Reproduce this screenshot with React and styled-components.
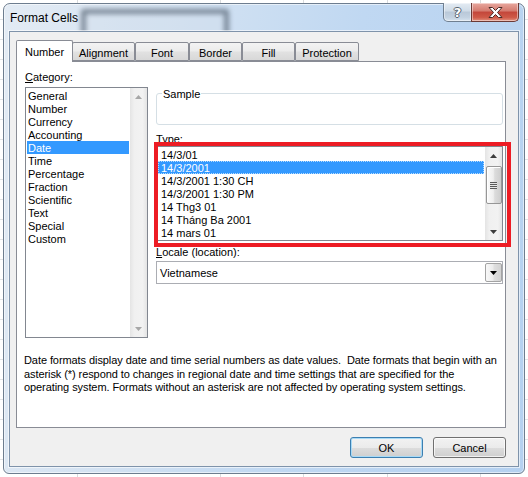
import React from 'react';
import styled, { createGlobalStyle } from 'styled-components';

const FONT = `"Liberation Sans", Arial, sans-serif`;

const Global = createGlobalStyle`
  html, body { margin: 0; padding: 0; }
  body {
    width: 528px;
    height: 477px;
    overflow: hidden;
    font-family: ${FONT};
    background-color: #ffffff;
    background-image:
      linear-gradient(90deg, transparent 77px, #d9dbdd 77px, #d9dbdd 78px, transparent 78px),
      linear-gradient(90deg, transparent 220px, #d9dbdd 220px, #d9dbdd 221px, transparent 221px),
      linear-gradient(90deg, transparent 303px, #d9dbdd 303px, #d9dbdd 304px, transparent 304px),
      linear-gradient(90deg, transparent 387px, #d9dbdd 387px, #d9dbdd 388px, transparent 388px),
      linear-gradient(90deg, transparent 480px, #d9dbdd 480px, #d9dbdd 481px, transparent 481px),
      repeating-linear-gradient(180deg, transparent 0, transparent 19px, #e2e4e6 19px, #e2e4e6 20px);
  }
  #root { width: 528px; height: 477px; }
`;

const Window = styled.div`
  box-sizing: border-box;
  margin: 3px 0 0 3px;
  width: 522px;
  height: 471px;
  border: 1px solid #6d7d8f;
  border-radius: 7px 7px 6px 6px;
  background: linear-gradient(100deg, #e3ebf4 0%, #d3e2f2 30%, #c0d8f2 60%, #b5d1f0 100%);
  box-shadow: inset 0 0 0 1px rgba(255, 255, 255, 0.55);
  padding: 0 5px 6px 5px;
  display: flex;
  flex-direction: column;
`;

const TitleBar = styled.div`
  height: 27px;
  flex: none;
  position: relative;
  display: flex;
  align-items: flex-start;
`;

const GlassShadow = styled.div`
  position: absolute;
  left: 72px;
  top: 5px;
  width: 148px;
  height: 34px;
  box-sizing: border-box;
  border: 5px solid rgba(60, 75, 92, 0.6);
  border-radius: 3px;
  background: rgba(210, 222, 235, 0.35);
  filter: blur(2.5px);
  pointer-events: none;
`;

const Title = styled.div`
  position: relative;
  margin: 7px 0 0 1px;
  font-size: 12px;
  line-height: 14px;
  color: #000;
`;

const Controls = styled.div`
  position: relative;
  margin: -1px 0 0 auto;
  display: flex;
`;

const CapButton = styled.div`
  box-sizing: border-box;
  height: 19px;
  width: ${(p) => p.$w}px;
  display: flex;
  align-items: center;
  justify-content: center;
  border: 1px solid ${(p) => (p.$close ? '#6b3a36' : '#6f7f90')};
  border-top: none;
  border-radius: ${(p) => (p.$close ? '0 0 5px 0' : '0 0 0 5px')};
  margin-left: ${(p) => (p.$close ? '-1px' : '0')};
  background: ${(p) =>
    p.$close
      ? 'linear-gradient(#e8a89f 0%, #d47a6e 45%, #c3463a 50%, #cf5a48 80%, #e2917f 100%)'
      : 'linear-gradient(#e3ebf3 0%, #cfdbe7 45%, #b9c8d8 50%, #c3d2e1 80%, #d8e4ef 100%)'};
  box-shadow: inset 0 0 0 1px rgba(255, 255, 255, 0.45);
`;

const HelpGlyph = styled.span`
  font-family: "DejaVu Sans", ${FONT};
  font-weight: bold;
  font-size: 13px;
  line-height: 13px;
  color: #ffffff;
  margin-top: 1px;
  text-shadow: 1px 0 0 #56626f, -1px 0 0 #56626f, 0 1px 0 #56626f, 0 -1px 0 #56626f;
`;

const Client = styled.div`
  position: relative;
  flex: 1;
  border: 1px solid #7f93aa;
  box-shadow: 0 0 0 1px rgba(255, 255, 255, 0.6);
  background: #f0f0f0;
  padding: 8px 12px 0 6px;
  display: flex;
  flex-direction: column;
`;

const Tabs = styled.div`
  display: flex;
  align-items: flex-start;
  height: 21px;
  position: relative;
  z-index: 1;
`;

const Tab = styled.div`
  box-sizing: border-box;
  width: ${(p) => p.$w}px;
  height: ${(p) => (p.$active ? 22 : 19)}px;
  margin-top: ${(p) => (p.$active ? 0 : 2)}px;
  margin-left: ${(p) => (p.$overlap ? -1 : 0)}px;
  border: 1px solid #898c95;
  border-bottom: ${(p) => (p.$active ? 'none' : '1px solid #898c95')};
  border-radius: 2px 2px 0 0;
  background: ${(p) =>
    p.$active ? '#ffffff' : 'linear-gradient(#f3f3f3 0%, #ececec 45%, #e1e1e1 55%, #d8d8d8 100%)'};
  position: relative;
  z-index: ${(p) => (p.$active ? 2 : 0)};
  display: flex;
  justify-content: center;
  padding-top: ${(p) => (p.$active ? 5 : 4)}px;
  font-size: 11px;
  line-height: 13px;
  color: #000;
`;

const Panel = styled.div`
  box-sizing: border-box;
  width: 490px;
  height: 367px;
  border: 1px solid #898c95;
  background: #ffffff;
  padding: 8px 2px 0 8px;
  display: flex;
  flex-direction: column;
`;

const Columns = styled.div`
  display: flex;
  gap: 8px;
`;

const Column = styled.div`
  width: ${(p) => p.$w}px;
  display: flex;
  flex-direction: column;
`;

const Label = styled.div`
  font-size: 11px;
  line-height: 14px;
  height: 13px;
  margin-top: ${(p) => p.$mt || 0}px;
  color: #000;
  u { text-decoration: underline; text-underline-offset: 1px; }
`;

const ListBox = styled.div`
  box-sizing: border-box;
  height: ${(p) => p.$h}px;
  margin-top: ${(p) => p.$mt || 0}px;
  border: 1px solid #828790;
  background: #fff;
  display: flex;
`;

const Items = styled.div`
  flex: 1;
  padding: 1px 1px 0 1px;
  overflow: hidden;
`;

const Item = styled.div`
  height: 13px;
  line-height: 14px;
  font-size: 11px;
  padding-left: ${(p) => p.$pl || 1}px;
  white-space: nowrap;
  box-sizing: border-box;
  color: ${(p) => (p.$sel ? '#ffffff' : '#000000')};
  background: ${(p) => (p.$sel ? '#3399ff' : 'transparent')};
  outline: ${(p) => (p.$focus ? '1px dotted #b6dcff' : 'none')};
  outline-offset: -1px;
`;

const ScrollBar = styled.div`
  width: 17px;
  flex: none;
  display: flex;
  flex-direction: column;
  background: linear-gradient(90deg, #e4e4e4 0%, #f0f0f0 25%, #f2f2f2 75%, #e4e4e4 100%);
`;

const ArrowBox = styled.div`
  height: 17px;
  flex: none;
  display: flex;
  align-items: center;
  justify-content: center;
`;

const Track = styled.div`
  flex: 1;
  display: flex;
  flex-direction: column;
  align-items: center;
`;

const Thumb = styled.div`
  box-sizing: border-box;
  width: 16px;
  height: 38px;
  margin-top: 2px;
  border: 1px solid #969696;
  border-radius: 2px;
  background: linear-gradient(90deg, #fbfbfb 0%, #eeeeee 45%, #dcdcdc 55%, #cdcdcd 100%);
  box-shadow: inset 1px 1px 0 #ffffff;
  display: flex;
  align-items: center;
  justify-content: center;
`;

const Grip = styled.div`
  width: 7px;
  height: 7px;
  background: repeating-linear-gradient(180deg, #5a5a5a 0, #5a5a5a 1px, #e6e6e6 1px, #e6e6e6 2px);
`;

const GroupBox = styled.div`
  position: relative;
  box-sizing: border-box;
  height: 32px;
  margin-top: 23px;
  border: 1px solid #d5dfe5;
  border-radius: 3px;
`;

const Legend = styled.span`
  position: absolute;
  left: 5px;
  top: -7px;
  padding: 0 1px;
  background: #fff;
  font-size: 11px;
  line-height: 14px;
  color: #000;
`;

const Marked = styled.div`
  position: relative;
  margin-top: 1px;
`;

const RedMark = styled.div`
  position: absolute;
  left: -2px;
  top: -4px;
  right: -8px;
  bottom: -6px;
  border: 4px solid #ed1c24;
  pointer-events: none;
`;

const Select = styled.div`
  box-sizing: border-box;
  height: 23px;
  margin-top: 3px;
  border: 1px solid #abadb3;
  background: #fff;
  display: flex;
  align-items: center;
  padding-left: 3px;
  font-size: 11px;
  color: #000;
`;

const SelectText = styled.span`
  flex: 1;
  padding-top: 1px;
`;

const DropButton = styled.div`
  box-sizing: border-box;
  width: 17px;
  height: 19px;
  border: 1px solid #a3a3a3;
  border-radius: 2px;
  background: linear-gradient(90deg, #f8f8f8 0%, #ececec 45%, #dedede 55%, #d2d2d2 100%);
  display: flex;
  align-items: center;
  justify-content: center;
`;

const Description = styled.div`
  margin: 16px 0 0 -1px;
  font-size: 11px;
  line-height: 13.5px;
  letter-spacing: -0.08px;
  color: #000;
  white-space: nowrap;
`;

const ButtonRow = styled.div`
  width: 490px;
  margin-top: 9px;
  display: flex;
  justify-content: flex-end;
  gap: 10px;
`;

const Button = styled.button`
  box-sizing: border-box;
  width: 73px;
  height: 21px;
  padding: 1px 0 0;
  border: 1px solid ${(p) => (p.$primary ? '#3c7fb1' : '#707070')};
  border-radius: 3px;
  background: linear-gradient(#f2f2f2 0%, #ebebeb 50%, #dddddd 50%, #cfcfcf 100%);
  box-shadow: inset 0 0 0 1px ${(p) => (p.$primary ? '#a8daf6' : 'rgba(255,255,255,0.7)')};
  font-family: ${FONT};
  font-size: 11px;
  color: #000;
`;

const Triangle = ({ up, color }) => (
  <svg width="7" height="4" viewBox="0 0 7 4">
    <polygon points={up ? '0,4 7,4 3.5,0' : '0,0 7,0 3.5,4'} fill={color} />
  </svg>
);

const CloseIcon = () => (
  <svg width="15" height="11" viewBox="0 0 15 11">
    <polygon
      points="1,0.5 4.5,0.5 7.5,3.5 10.5,0.5 14,0.5 9.5,5.5 14,10.5 10.5,10.5 7.5,7.5 4.5,10.5 1,10.5 5.5,5.5"
      fill="#ffffff"
      stroke="#4a2a26"
      strokeWidth="1"
      strokeLinejoin="round"
    />
  </svg>
);

const categories = [
  'General', 'Number', 'Currency', 'Accounting', 'Date', 'Time',
  'Percentage', 'Fraction', 'Scientific', 'Text', 'Special', 'Custom',
];

const types = [
  '14/3/01', '14/3/2001', '14/3/2001 1:30 CH', '14/3/2001 1:30 PM',
  '14 Thg3 01', '14 Tháng Ba 2001', '14 mars 01',
];

const tabs = [
  { label: 'Number', w: 57 },
  { label: 'Alignment', w: 63 },
  { label: 'Font', w: 54 },
  { label: 'Border', w: 53 },
  { label: 'Fill', w: 53 },
  { label: 'Protection', w: 64 },
];

export default function App() {
  return (
    <>
      <Global />
      <Window>
        <TitleBar>
          <GlassShadow />
          <Title>Format Cells</Title>
          <Controls>
            <CapButton $w={29}>
              <HelpGlyph>?</HelpGlyph>
            </CapButton>
            <CapButton $w={48} $close>
              <CloseIcon />
            </CapButton>
          </Controls>
        </TitleBar>
        <Client>
          <Tabs>
            {tabs.map((t, i) => (
              <Tab key={t.label} $w={t.w} $active={i === 0} $overlap={i === 1}>
                {t.label}
              </Tab>
            ))}
          </Tabs>
          <Panel>
            <Columns>
              <Column $w={123}>
                <Label>
                  <u>C</u>ategory:
                </Label>
                <ListBox $h={251} $mt={4}>
                  <Items>
                    {categories.map((c) => (
                      <Item key={c} $sel={c === 'Date'} $pl={1}>
                        {c}
                      </Item>
                    ))}
                  </Items>
                  <ScrollBar>
                    <ArrowBox>
                      <Triangle up color="#a7a7a7" />
                    </ArrowBox>
                    <Track />
                    <ArrowBox>
                      <Triangle color="#a7a7a7" />
                    </ArrowBox>
                  </ScrollBar>
                </ListBox>
              </Column>
              <Column $w={347}>
                <GroupBox>
                  <Legend>Sample</Legend>
                </GroupBox>
                <Label $mt={7}>
                  <u>T</u>ype:
                </Label>
                <Marked>
                  <ListBox $h={95}>
                    <Items>
                      {types.map((t, i) => (
                        <Item key={t} $sel={i === 1} $focus={i === 1} $pl={3}>
                          {t}
                        </Item>
                      ))}
                    </Items>
                    <ScrollBar>
                      <ArrowBox>
                        <Triangle up color="#3c3c3c" />
                      </ArrowBox>
                      <Track>
                        <Thumb>
                          <Grip />
                        </Thumb>
                      </Track>
                      <ArrowBox>
                        <Triangle color="#3c3c3c" />
                      </ArrowBox>
                    </ScrollBar>
                  </ListBox>
                  <RedMark />
                </Marked>
                <Label $mt={4}>
                  <u>L</u>ocale (location):
                </Label>
                <Select>
                  <SelectText>Vietnamese</SelectText>
                  <DropButton>
                    <Triangle color="#000000" />
                  </DropButton>
                </Select>
              </Column>
            </Columns>
            <Description>
              Date formats display date and time serial numbers as date values.&nbsp; Date formats that begin with an
              <br />
              asterisk (*) respond to changes in regional date and time settings that are specified for the
              <br />
              operating system. Formats without an asterisk are not affected by operating system settings.
            </Description>
          </Panel>
          <ButtonRow>
            <Button $primary>OK</Button>
            <Button>Cancel</Button>
          </ButtonRow>
        </Client>
      </Window>
    </>
  );
}
